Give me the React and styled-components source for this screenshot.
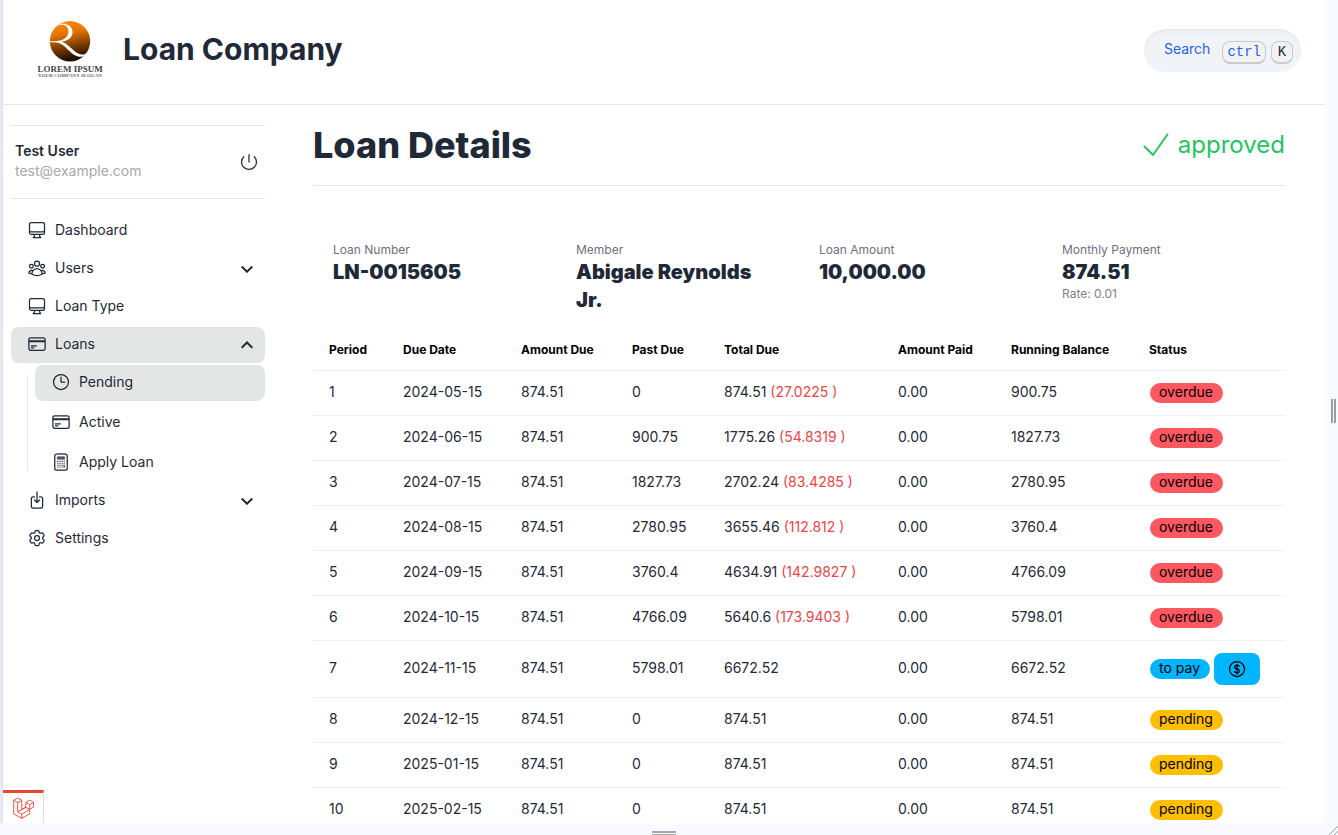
import React from "react";
import styled, { createGlobalStyle } from "styled-components";
import {
  HiOutlineComputerDesktop,
  HiOutlineUserGroup,
  HiOutlineCreditCard,
  HiOutlineClock,
  HiOutlineCalculator,
  HiOutlineArrowDownOnSquare,
  HiOutlineCog6Tooth,
  HiOutlinePower,
  HiOutlineCurrencyDollar,
} from "react-icons/hi2";

const ink = "#1f2937";
const line = "#e5e6e6";

const GlobalStyle = createGlobalStyle`
  *, *::before, *::after { box-sizing: border-box; }
  body {
    margin: 0;
    background: #f8faff;
    color: ${ink};
    font: 14px/20px Inter, "Liberation Sans", sans-serif;
    overflow: hidden;
  }
  h1, h2, p, dl, dd, ul { margin: 0; padding: 0; }
  ul { list-style: none; }
  button { font: inherit; color: inherit; border: 0; padding: 0; background: none; cursor: pointer; }
  a { color: inherit; text-decoration: none; }
  svg { flex: none; }
`;

const Shell = styled.div`
  position: relative;
  display: grid;
  grid-template-columns: 3px minmax(0, 1fr) 13px;
  grid-template-rows: minmax(0, 1fr) 12px;
  height: 100vh;
`;

const Edge = styled.div`
  background: #e5eaf4;
  border-right: 1px solid #dde1eb;
`;

const Page = styled.div`
  background: #fff;
  overflow: hidden;
`;

const SideGrip = styled.div`
  grid-column: 3;
  grid-row: 1;
  align-self: center;
  justify-self: end;
  width: 5px;
  height: 24px;
  margin: 0 2px 2px 0;
  border: solid #9d9d9d;
  border-width: 0 2px;
`;

const BottomGrip = styled.div`
  grid-column: 2;
  grid-row: 2;
  align-self: end;
  justify-self: center;
  width: 24px;
  height: 4px;
  border: solid #a8a8a8;
  border-width: 2px 0 1px;
`;

const CornerGrip = styled.svg`
  grid-column: 3;
  grid-row: 2;
  align-self: end;
  justify-self: end;
`;

const Header = styled.header`
  display: flex;
  align-items: center;
  justify-content: space-between;
  height: 105px;
  padding: 0 24px 4px 32px;
  border-bottom: 1px solid ${line};
`;

const Brand = styled.a`
  display: flex;
  align-items: center;
  gap: 18px;
  font-size: 30px;
  line-height: 36px;
  font-weight: 700;
`;

const BrandName = styled.span`
  padding-bottom: 2px;
`;

const SearchButton = styled.button`
  display: flex;
  align-items: center;
  gap: 5px;
  height: 43px;
  padding: 0 8px 0 20px;
  border-radius: 22px;
  background: #f0f4f9;
  box-shadow: inset 0 2px 4px rgba(0, 0, 0, 0.05);
  color: #2563eb;
`;

const SearchLabel = styled.span`
  padding: 0 7px 2px 0;
`;

const Kbd = styled.kbd`
  padding: 0 4px;
  margin-top: 4px;
  border: 1px solid #c9cacb;
  border-bottom-width: 2px;
  border-radius: 8px;
  background: #f2f2f2;
  color: ${(p) => (p.$dark ? ink : "inherit")};
  font: 14px/20px "Liberation Mono", monospace;
  min-width: 22px;
`;

const Columns = styled.div`
  display: flex;
  align-items: flex-start;
  padding: 20px 40px 0 8px;
  gap: 48px;
`;

const Sidebar = styled.aside`
  flex: none;
  width: 254px;
`;

const UserCard = styled.div`
  display: flex;
  align-items: center;
  justify-content: space-between;
  height: 74px;
  margin-bottom: 14px;
  padding: 0 6px 0 4px;
  border: solid ${line};
  border-width: 1px 0;
`;

const UserText = styled.div`
  padding-bottom: 2px;
`;

const UserName = styled.p`
  font-weight: 600;
`;

const UserEmail = styled.p`
  color: #a5a9b1;
`;

const PowerButton = styled.button`
  display: flex;
`;

const Menu = styled.ul`
  display: flex;
  flex-direction: column;
  gap: ${(p) => (p.$sub ? "4px" : "2px")};
  flex: 1;
`;

const MenuLink = styled.a`
  display: flex;
  align-items: center;
  gap: 8px;
  height: 36px;
  padding: 0 12px 2px 16px;
  border-radius: 8px;
  background: ${(p) => (p.$active ? "#e4e6e5" : "transparent")};
`;

const MenuText = styled.span`
  flex: 1;
`;

const SubMenu = styled.div`
  display: flex;
  gap: 7px;
  padding: 2px 0 0 16px;
`;

const Rail = styled.span`
  width: 1px;
  margin: 10px 0;
  background: ${line};
`;

const Main = styled.main`
  flex: 1;
  min-width: 0;
`;

const TitleRow = styled.div`
  display: flex;
  align-items: center;
  justify-content: space-between;
  height: 61px;
  padding-bottom: 20px;
  border-bottom: 1px solid ${line};
`;

const Title = styled.h1`
  font-size: 36px;
  line-height: 40px;
  font-weight: 800;
`;

const Approved = styled.p`
  display: flex;
  align-items: center;
  gap: 8px;
  color: #22c55e;
  font-size: 24px;
  line-height: 32px;
`;

const Stats = styled.dl`
  display: grid;
  grid-template-columns: repeat(4, minmax(0, 1fr));
  margin: 56px 0 16px;
`;

const Stat = styled.div`
  padding: 0 20px;
`;

const StatLabel = styled.dt`
  font-size: 12px;
  line-height: 16px;
  color: #6b7280;
`;

const StatValue = styled.dd`
  font-size: 20px;
  line-height: 28px;
  font-weight: 900;
`;

const StatNote = styled.dd`
  font-size: 12px;
  line-height: 16px;
  color: #7d8188;
`;

const Table = styled.table`
  width: 100%;
  table-layout: fixed;
  border-collapse: separate;
  border-spacing: 0;
  text-align: left;
`;

const Th = styled.th`
  width: ${(p) => p.$w}px;
  padding: 12px 16px;
  border-bottom: 1px solid #f0f0f0;
  color: #000;
  font-size: 12px;
  line-height: 16px;
  font-weight: 700;
  white-space: nowrap;
`;

const Td = styled.td`
  padding: 11px 16px 13px;
  border-bottom: 1px solid #f0f0f0;
  white-space: nowrap;
`;

const StatusTd = styled(Td)`
  padding: 12px 16px 12px 17px;
`;

const Penalty = styled.span`
  color: #ef4444;
`;

const StatusCell = styled.div`
  display: flex;
  align-items: center;
  gap: 4px;
`;

const badgeColors = { overdue: "#ff5861", "to pay": "#00b5ff", pending: "#ffbe00" };

const Badge = styled.span`
  height: 20px;
  padding: 0 10px 0 9px;
  border-radius: 10px;
  background: ${(p) => badgeColors[p.$status]};
  color: #000;
  line-height: 18px;
`;

const PayButton = styled.button`
  display: flex;
  align-items: center;
  justify-content: center;
  width: 46px;
  height: 32px;
  border-radius: 8px;
  background: #00b5ff;
  color: #000;
`;

const DebugTab = styled.button`
  position: absolute;
  left: 3px;
  bottom: 12px;
  display: flex;
  align-items: center;
  justify-content: center;
  width: 41px;
  height: 33px;
  border-top: 3px solid #eb4432;
  border-right: 1px solid #ddd;
  background: #fff;
`;

function Logo() {
  return (
    <svg width="70" height="60" viewBox="0 0 70 60" role="img" aria-label="Lorem Ipsum">
      <defs>
        <linearGradient id="orb" x1="0.4" y1="0" x2="0.6" y2="1">
          <stop offset="0" stopColor="#ff8a0c" />
          <stop offset="0.3" stopColor="#e27400" />
          <stop offset="0.65" stopColor="#713900" />
          <stop offset="1" stopColor="#0e0500" />
        </linearGradient>
      </defs>
      <circle cx="35" cy="21.300" r="20.200" fill="url(#orb)" />
      <path
        d="M19 6.500C25 2 36 2.500 37.500 11C38.500 18 31 21.500 26 21.800C34 23 38 33 46 34.500C49 35 51 34 53.500 31C51 36 47 37.500 43 36.500C34 34 31 24 22 22.500C19 22 16 22.200 14.500 22.300L14.500 20.900C20 21.500 24 21 28 19.500C36 16 34.500 6 28 4.800C25 4.300 22 5 19 6.500Z"
        fill="#fff"
      />
      <text x="35" y="52" textAnchor="middle" fontFamily="Liberation Serif, serif" fontWeight="700" fontSize="9" fill="#444">
        LOREM IPSUM
      </text>
      <text x="35" y="57" textAnchor="middle" fontFamily="Liberation Serif, serif" fontSize="5" fill="#666">
        YOUR COMPANY SLOGAN
      </text>
    </svg>
  );
}

function Chevron({ up }) {
  return (
    <svg width="12" height="10" viewBox="0 0 12 10" fill="none" stroke={ink} strokeWidth="2" aria-hidden="true">
      <path d={up ? "M.7 8.700L6 3.500l5.300 5.200" : "M.7 3.500L6 8.700l5.300-5.200"} />
    </svg>
  );
}

function LaravelMark() {
  return (
    <svg width="21" height="22" viewBox="0 0 21 22" fill="none" stroke="#eb4432" strokeWidth="0.9" strokeLinejoin="round" aria-hidden="true">
      <path d="M.7 3.200L4.800 1l4 2.200v9.400l4-2.300V5.400l4-2.300 3.800 2.300v4.700l-4 2.300v4.500L8.800 21.300.7 16.700zM.7 3.200l4 2.300 4.100-2.300M4.700 5.500v9.300l4.100 2.300 7.800-4.700-3.800-2.100-8.100 4.500M12.800 5.400l3.900 2.300 3.900-2.300M16.700 7.700v4.700M8.800 17.100v4.200" />
    </svg>
  );
}

const submenu = [
  { label: "Pending", Icon: HiOutlineClock, active: true },
  { label: "Active", Icon: HiOutlineCreditCard },
  { label: "Apply Loan", Icon: HiOutlineCalculator },
];

const menu = [
  { label: "Dashboard", Icon: HiOutlineComputerDesktop },
  { label: "Users", Icon: HiOutlineUserGroup, expandable: true },
  { label: "Loan Type", Icon: HiOutlineComputerDesktop },
  { label: "Loans", Icon: HiOutlineCreditCard, expandable: true, active: true, children: submenu },
  { label: "Imports", Icon: HiOutlineArrowDownOnSquare, expandable: true },
  { label: "Settings", Icon: HiOutlineCog6Tooth },
];

function MenuItem({ label, Icon, active, expandable, children }) {
  return (
    <li>
      <MenuLink href="#" $active={active}>
        <Icon size={20} />
        <MenuText>{label}</MenuText>
        {expandable && <Chevron up={Boolean(children)} />}
      </MenuLink>
      {children && (
        <SubMenu>
          <Rail />
          <Menu $sub>
            {children.map((item) => (
              <MenuItem key={item.label} {...item} />
            ))}
          </Menu>
        </SubMenu>
      )}
    </li>
  );
}

const stats = [
  { label: "Loan Number", value: "LN-0015605" },
  { label: "Member", value: "Abigale Reynolds Jr." },
  { label: "Loan Amount", value: "10,000.00" },
  { label: "Monthly Payment", value: "874.51", note: "Rate: 0.01" },
];

const columns = [
  ["Period", 74],
  ["Due Date", 118],
  ["Amount Due", 111],
  ["Past Due", 92],
  ["Total Due", 174],
  ["Amount Paid", 113],
  ["Running Balance", 138],
  ["Status", 152],
];

const rows = [
  ["2024-05-15", "0", "874.51", "27.0225", "900.75", "overdue"],
  ["2024-06-15", "900.75", "1775.26", "54.8319", "1827.73", "overdue"],
  ["2024-07-15", "1827.73", "2702.24", "83.4285", "2780.95", "overdue"],
  ["2024-08-15", "2780.95", "3655.46", "112.812", "3760.4", "overdue"],
  ["2024-09-15", "3760.4", "4634.91", "142.9827", "4766.09", "overdue"],
  ["2024-10-15", "4766.09", "5640.6", "173.9403", "5798.01", "overdue"],
  ["2024-11-15", "5798.01", "6672.52", null, "6672.52", "to pay"],
  ["2024-12-15", "0", "874.51", null, "874.51", "pending"],
  ["2025-01-15", "0", "874.51", null, "874.51", "pending"],
  ["2025-02-15", "0", "874.51", null, "874.51", "pending"],
];

export default function App() {
  return (
    <>
      <GlobalStyle />
      <Shell>
        <Edge />
        <Page>
          <Header>
            <Brand href="#">
              <Logo />
              <BrandName>Loan Company</BrandName>
            </Brand>
            <SearchButton type="button">
              <SearchLabel>Search</SearchLabel>
              <Kbd>ctrl</Kbd>
              <Kbd $dark>K</Kbd>
            </SearchButton>
          </Header>
          <Columns>
            <Sidebar>
              <UserCard>
                <UserText>
                  <UserName>Test User</UserName>
                  <UserEmail>test@example.com</UserEmail>
                </UserText>
                <PowerButton type="button" aria-label="Log out">
                  <HiOutlinePower size={20} />
                </PowerButton>
              </UserCard>
              <nav>
                <Menu>
                  {menu.map((item) => (
                    <MenuItem key={item.label} {...item} />
                  ))}
                </Menu>
              </nav>
            </Sidebar>
            <Main>
              <TitleRow>
                <Title>Loan Details</Title>
                <Approved>
                  <svg width="28" height="28" viewBox="0 0 28 28" fill="none" stroke="currentColor" strokeWidth="2" strokeLinecap="round" strokeLinejoin="round" aria-hidden="true">
                    <path d="M2.500 15.500L11 24 25.500 3.500" />
                  </svg>
                  approved
                </Approved>
              </TitleRow>
              <Stats>
                {stats.map((s) => (
                  <Stat key={s.label}>
                    <StatLabel>{s.label}</StatLabel>
                    <StatValue>{s.value}</StatValue>
                    {s.note && <StatNote>{s.note}</StatNote>}
                  </Stat>
                ))}
              </Stats>
              <Table>
                <thead>
                  <tr>
                    {columns.map(([name, w]) => (
                      <Th key={name} $w={w} scope="col">{name}</Th>
                    ))}
                  </tr>
                </thead>
                <tbody>
                  {rows.map(([date, past, total, penalty, balance, status], i) => (
                    <tr key={date}>
                      <Td>{i + 1}</Td>
                      <Td>{date}</Td>
                      <Td>874.51</Td>
                      <Td>{past}</Td>
                      <Td>
                        {total} {penalty && <Penalty>({penalty} )</Penalty>}
                      </Td>
                      <Td>0.00</Td>
                      <Td>{balance}</Td>
                      <StatusTd>
                        <StatusCell>
                          <Badge $status={status}>{status}</Badge>
                          {status === "to pay" && (
                            <PayButton type="button" aria-label="Pay">
                              <HiOutlineCurrencyDollar size={20} />
                            </PayButton>
                          )}
                        </StatusCell>
                      </StatusTd>
                    </tr>
                  ))}
                </tbody>
              </Table>
            </Main>
          </Columns>
        </Page>
        <SideGrip />
        <BottomGrip />
        <CornerGrip width="10" height="10" viewBox="0 0 10 10" stroke="#a0a0a0" aria-hidden="true">
          <path d="M1 10L10 1M6 10l4-4" />
        </CornerGrip>
        <DebugTab type="button" aria-label="Open debug bar">
          <LaravelMark />
        </DebugTab>
      </Shell>
    </>
  );
}
